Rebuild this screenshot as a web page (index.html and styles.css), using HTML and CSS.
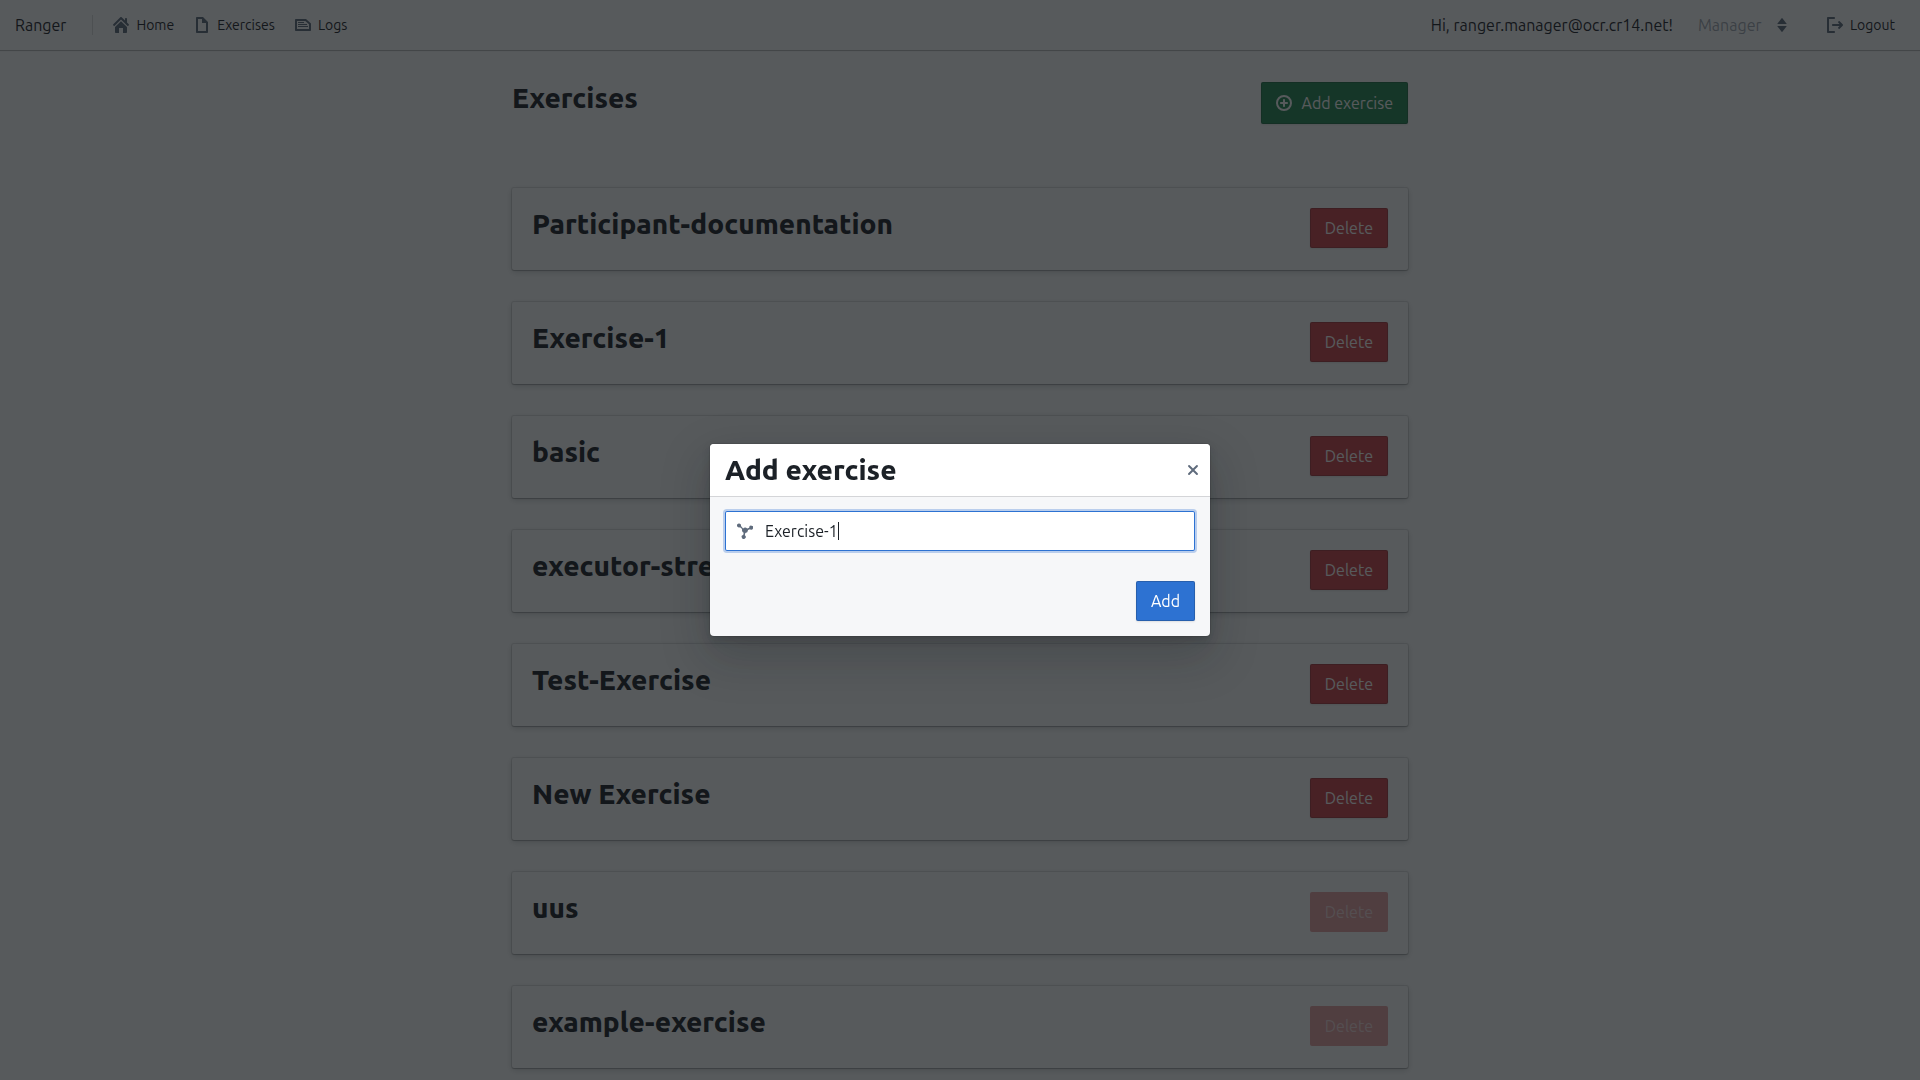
FILE: index.html
```
<!DOCTYPE html>
<html lang="en">

<head>
    <meta charset="UTF-8">
    <meta name="viewport" content="width=device-width, initial-scale=1.0">
    <title>Ranger</title>
    <link rel="stylesheet" href="styles.css">
</head>

<body class="overlay-open">

    <!-- Top Bar -->
    <header class="navbar">
        <nav class="navbar-group">
            <span class="navbar-brand">Ranger</span>
            <span class="navbar-divider"></span>
            <a class="nav-link" href="#home">
                <svg class="icon" viewBox="0 0 16 16"><path d="M2 10v5c0 .55.45 1 1 1h3v-5h4v5h3c.55 0 1-.45 1-1v-5L8 4.200zM15.700 7.300L14 5.600V2c0-.550-.450-1-1-1s-1 .450-1 1v1.600L8.700.300a1 1 0 0 0-1.400 0l-7 7a1 1 0 0 0 1.400 1.400L8 2.400l6.300 6.300a1 1 0 0 0 1.400-1.400z"/></svg>
                <span>Home</span>
            </a>
            <a class="nav-link" href="#exercises">
                <svg class="icon" viewBox="0 0 16 16"><path fill-rule="evenodd" d="M9 0H3c-.55 0-1 .45-1 1v14c0 .55.45 1 1 1h10c.55 0 1-.45 1-1V5L9 0zm3 14H4V2h4v4h4v8z"/></svg>
                <span>Exercises</span>
            </a>
            <a class="nav-link" href="#logs">
                <svg class="icon" viewBox="0 0 16 16"><path fill-rule="evenodd" d="M11 2H1c-.55 0-1 .45-1 1v10c0 .55.45 1 1 1h14c.55 0 1-.45 1-1V6.500L11 2zm3 10H2V4h8.300L14 7.300V12z"/><path d="M3 5h6v1H3zM3 7h9v1H3zM3 9h10v1H3z"/></svg>
                <span>Logs</span>
            </a>
        </nav>
        <div class="navbar-group">
            <span class="greeting">Hi, ranger.manager@ocr.cr14.net!</span>
            <div class="role-select">
                <select aria-label="Role" disabled>
                    <option>Manager</option>
                </select>
                <svg class="icon" viewBox="0 0 16 16"><path d="M3.200 7L7.400 1.400a.8.8 0 0 1 1.200 0L12.800 7zM3.200 9h9.600l-4.200 5.600a.8.8 0 0 1-1.200 0z"/></svg>
            </div>
            <button class="nav-link" type="button">
                <svg class="icon" viewBox="0 0 16 16"><path d="M7 14H2V2h5c.55 0 1-.45 1-1s-.45-1-1-1H1C.45 0 0 .45 0 1v14c0 .55.45 1 1 1h6c.55 0 1-.45 1-1s-.45-1-1-1zM15.700 7.300l-3-3a1 1 0 0 0-1.400 1.400L12.600 7H6c-.55 0-1 .45-1 1s.45 1 1 1h6.600l-1.300 1.300a1 1 0 0 0 1.400 1.400l3-3a1 1 0 0 0 0-1.400z"/></svg>
                <span>Logout</span>
            </button>
        </div>
    </header>

    <!-- Exercise List -->
    <main class="container">
        <div class="page-header">
            <h2>Exercises</h2>
            <button class="button success" type="button">
                <svg class="icon" viewBox="0 0 16 16"><path fill-rule="evenodd" d="M8 0a8 8 0 1 0 0 16A8 8 0 0 0 8 0zm0 14A6 6 0 1 1 8 2a6 6 0 0 1 0 12zM9 7V5c0-.55-.45-1-1-1s-1 .45-1 1v2H5c-.55 0-1 .45-1 1s.45 1 1 1h2v2c0 .55.45 1 1 1s1-.45 1-1V9h2c.55 0 1-.45 1-1s-.45-1-1-1H9z"/></svg>
                <span>Add exercise</span>
            </button>
        </div>

        <div class="card-list">
            <div class="card">
                <h2>Participant-documentation</h2>
                <button class="button danger" type="button">Delete</button>
            </div>
            <div class="card">
                <h2>Exercise-1</h2>
                <button class="button danger" type="button">Delete</button>
            </div>
            <div class="card">
                <h2>basic</h2>
                <button class="button danger" type="button">Delete</button>
            </div>
            <div class="card">
                <h2>executor-stress</h2>
                <button class="button danger" type="button">Delete</button>
            </div>
            <div class="card">
                <h2>Test-Exercise</h2>
                <button class="button danger" type="button">Delete</button>
            </div>
            <div class="card">
                <h2>New Exercise</h2>
                <button class="button danger" type="button">Delete</button>
            </div>
            <div class="card">
                <h2>uus</h2>
                <button class="button danger" type="button" disabled>Delete</button>
            </div>
            <div class="card">
                <h2>example-exercise</h2>
                <button class="button danger" type="button" disabled>Delete</button>
            </div>
        </div>
    </main>

    <!-- Add Exercise Dialog -->
    <div class="backdrop">
        <form class="dialog" role="dialog" aria-labelledby="dialog-title">
            <div class="dialog-header">
                <h2 id="dialog-title">Add exercise</h2>
                <button class="dialog-close" type="button" aria-label="Close">
                    <svg class="icon" viewBox="0 0 16 16"><path d="M9.410 8l3.290-3.290a1 1 0 0 0-1.410-1.410L8 6.590 4.710 3.300A1 1 0 0 0 3.300 4.710L6.590 8 3.300 11.290a1 1 0 0 0 1.410 1.410L8 9.410l3.290 3.290a1 1 0 0 0 1.410-1.410z"/></svg>
                </button>
            </div>
            <div class="dialog-body">
                <label class="input-group">
                    <svg class="icon" viewBox="0 0 16 16"><path d="M2 .5a2 2 0 1 0 1 3.700l2.100 1.700A3 3 0 0 0 5 7.500a3 3 0 0 0 1.700 2.300l-.5 2.200a2 2 0 1 0 1.600.300l.5-2.300A3 3 0 0 0 11 7.200V7l2-.8a2 2 0 1 0-.8-1.500l-2 .8a3 3 0 0 0-4.100-.100L4 3A2 2 0 0 0 2 .5z"/></svg>
                    <span class="input-field">
                        <input type="text" value="Exercise-1" aria-label="Exercise name" autofocus>
                        <span class="caret"></span>
                    </span>
                </label>
            </div>
            <div class="dialog-footer">
                <button class="button primary" type="submit">Add</button>
            </div>
        </form>
    </div>

    <script>
        // Put the cursor behind the last character
        const nameInput = document.querySelector('.input-group input');
        nameInput.focus();
        nameInput.setSelectionRange(nameInput.value.length, nameInput.value.length);
    </script>

</body>

</html>
```

FILE: styles.css
```
/* Basic reset */
* {
    margin: 0;
    padding: 0;
    box-sizing: border-box;
}

body {
    background-color: #fff;
    color: #1c2127;
    font-family: Ubuntu, "Noto Sans", sans-serif;
    font-size: 16px;
    line-height: 20px;
}

body.overlay-open {
    overflow: hidden;
}

button,
input,
select {
    font: inherit;
    color: inherit;
    border: none;
    background: none;
}

h2 {
    font-size: 28px;
    line-height: 32px;
    font-weight: 800;
}

.icon {
    width: 16px;
    height: 16px;
    flex: none;
    fill: #5f6b7c;
}

/* Top Bar */
.navbar {
    display: flex;
    justify-content: space-between;
    height: 50px;
    padding: 0 15px;
    box-shadow: 0 0 0 1px rgba(17, 20, 24, 0.1), 0 1px 1px rgba(17, 20, 24, 0.2);
}

.navbar-group {
    display: flex;
    align-items: center;
}

.navbar-divider {
    height: 20px;
    margin: 0 10px 0 26px;
    border-left: 1px solid rgba(17, 20, 24, 0.15);
}

.nav-link {
    display: flex;
    align-items: center;
    gap: 7px;
    height: 30px;
    padding: 0 10px;
    font-size: 14px;
    color: #1c2127;
    text-decoration: none;
    cursor: pointer;
}

.greeting {
    margin-right: 15px;
}

.role-select {
    display: flex;
    align-items: center;
    margin-right: 20px;
    padding-right: 7px;
}

.role-select select {
    appearance: none;
    height: 30px;
    padding: 0 12px 0 10px;
    color: rgba(95, 107, 124, 0.6);
    opacity: 1;
}

/* Buttons */
.button {
    display: flex;
    align-items: center;
    gap: 10px;
    height: 40px;
    padding: 0 15px;
    border-radius: 2px;
    color: #fff;
    box-shadow: inset 0 0 0 1px rgba(17, 20, 24, 0.2), 0 1px 2px rgba(17, 20, 24, 0.1);
    cursor: pointer;
}

.button .icon {
    fill: #fff;
}

.button.primary {
    background-color: #2d72d2;
}

.button.success {
    height: 42px;
    background-color: #238551;
}

.button.danger {
    background-color: #cd4246;
}

.button.danger:disabled {
    background-color: rgba(205, 66, 70, 0.5);
    color: rgba(255, 255, 255, 0.6);
    box-shadow: none;
    cursor: not-allowed;
}

/* Exercise List */
.container {
    max-width: 896px;
    margin: 0 auto;
    padding: 32px 0;
}

.page-header {
    display: flex;
    justify-content: space-between;
    align-items: flex-start;
    margin-bottom: 64px;
}

.card-list {
    display: flex;
    flex-direction: column;
    gap: 32px;
}

.card {
    display: flex;
    justify-content: space-between;
    align-items: flex-start;
    padding: 20px 20px 22px;
    border-radius: 2px;
    background-color: #fff;
    box-shadow: 0 0 0 1px rgba(17, 20, 24, 0.1), 0 1px 1px rgba(17, 20, 24, 0.2), 0 2px 6px rgba(17, 20, 24, 0.2);
}

/* Dialog */
.backdrop {
    position: fixed;
    inset: 0;
    display: flex;
    align-items: center;
    justify-content: center;
    background-color: rgba(15, 20, 23, 0.7);
}

.dialog {
    width: 500px;
    border-radius: 4px;
    background-color: #f6f7f9;
    box-shadow: 0 0 0 1px rgba(17, 20, 24, 0.1), 0 4px 8px rgba(17, 20, 24, 0.2), 0 18px 46px 6px rgba(17, 20, 24, 0.2);
}

.dialog-header {
    display: flex;
    align-items: center;
    justify-content: space-between;
    height: 52px;
    padding: 0 2px 0 15px;
    border-radius: 4px 4px 0 0;
    background-color: #fff;
    box-shadow: 0 1px 0 rgba(17, 20, 24, 0.15);
}

.dialog-close {
    display: flex;
    align-items: center;
    justify-content: center;
    width: 30px;
    height: 30px;
    cursor: pointer;
}

.dialog-body {
    padding: 15px;
}

.input-group {
    display: flex;
    align-items: center;
    gap: 12px;
    height: 40px;
    padding: 0 12px;
    border-radius: 2px;
    background-color: #fff;
    box-shadow: inset 0 0 0 1px rgba(17, 20, 24, 0.3);
}

.input-group:focus-within {
    box-shadow: inset 0 0 0 1px #2d72d2, 0 0 0 2px rgba(45, 114, 210, 0.3);
}

.input-field {
    position: relative;
    flex: 1;
    display: flex;
}

.input-field input {
    flex: 1;
    min-width: 0;
    height: 30px;
    outline: none;
    caret-color: transparent;
}

/* Text cursor, one pixel wide */
.caret {
    position: absolute;
    top: 6px;
    left: 73px;
    width: 1px;
    height: 18px;
    background-color: #1c2127;
}

.dialog-footer {
    display: flex;
    justify-content: flex-end;
    padding: 15px;
}
```
